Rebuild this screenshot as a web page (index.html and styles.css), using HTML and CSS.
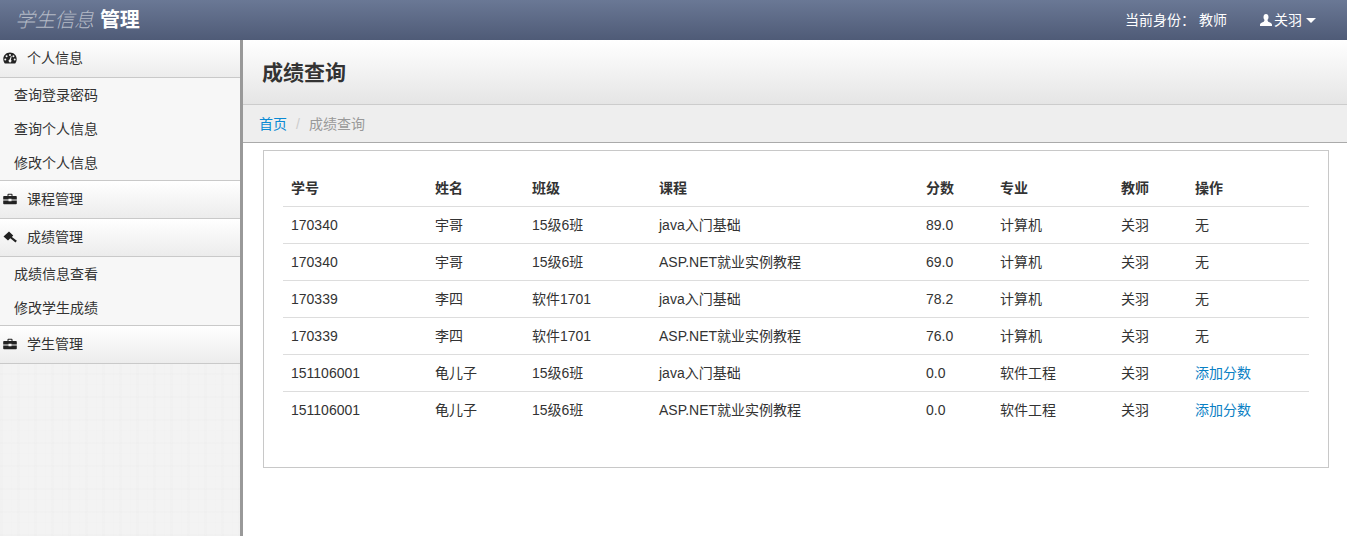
FILE: index.html
```html
<!DOCTYPE html>
<html lang="zh-CN">
<head>
  <meta charset="UTF-8" />
  <meta name="viewport" content="width=device-width, initial-scale=1" />
  <title>成绩查询</title>
  <link rel="stylesheet" href="styles.css">
</head>
<body>

  <header class="topbar">
    <div class="brand"><em>学生信息</em> <strong>管理</strong></div>
    <div class="topbar-right">
      <span class="role">当前身份：&nbsp;教师</span>
      <span class="user">
        <svg class="icon-user" viewBox="0 0 12 12" aria-hidden="true"><path d="M6 0C4.500 0 3.500 1.200 3.500 3 3.500 4.300 3.900 5.300 4.500 5.900 4.400 7 3.700 7.700 2.500 8.300 1.200 9 0 9.500 0 10.800L0 12 12 12 12 10.800C12 9.500 10.800 9 9.500 8.300 8.300 7.700 7.600 7 7.500 5.900 8.100 5.300 8.500 4.300 8.500 3 8.500 1.200 7.500 0 6 0Z"/></svg>
        关羽
        <span class="caret"></span>
      </span>
    </div>
  </header>

  <div class="layout">
    <nav class="sidebar">
      <a class="nav-head" href="#">
        <svg class="nav-icon" viewBox="0 0 14 12" aria-hidden="true"><path fill-rule="evenodd" d="M7 .5C3.200 .5.300 3.400.300 7c0 1.700.6 3.200 1.500 4.500h10.400c.9-1.300 1.500-2.800 1.500-4.500C13.700 3.400 10.800 .5 7 .5ZM7 2a1 1 0 1 1 0 2 1 1 0 0 1 0-2ZM3.600 3.300a1 1 0 1 1 0 2 1 1 0 0 1 0-2ZM10.400 3.300a1 1 0 1 1 0 2 1 1 0 0 1 0-2ZM2.300 6.500a1 1 0 1 1 0 2 1 1 0 0 1 0-2ZM11.700 6.500a1 1 0 1 1 0 2 1 1 0 0 1 0-2ZM8.700 4.200 7.900 7.800a1.400 1.400 0 1 1-1.300-.2L8 4Z"/></svg>
        个人信息
      </a>
      <div class="nav-sub">
        <a href="#">查询登录密码</a>
        <a href="#">查询个人信息</a>
        <a href="#">修改个人信息</a>
      </div>
      <a class="nav-head" href="#">
        <svg class="nav-icon" viewBox="0 0 14 12" aria-hidden="true"><path fill-rule="evenodd" d="M4.500 1.500C4.500 1 4.900 .8 5.300 .8H8.700C9.100 .8 9.500 1 9.500 1.500V3H13C13.500 3 13.800 3.300 13.800 3.800V6.400H8.500V5.700H5.500V6.400H.2V3.800C.2 3.300.5 3 1 3H4.500ZM5.500 1.800V3H8.500V1.800ZM.2 7.400H5.500V8.200H8.500V7.400H13.800V10.400C13.800 10.900 13.500 11.200 13 11.200H1C.5 11.200.2 10.900.2 10.400Z"/></svg>
        课程管理
      </a>
      <a class="nav-head" href="#">
        <svg class="nav-icon" viewBox="0 0 14 12" aria-hidden="true"><path d="M6 .6 10.200 4.600 8.900 5.900 13.900 9.700 12.500 11.400 7.300 7.300 5 9.600 .5 5.400Z"/></svg>
        成绩管理
      </a>
      <div class="nav-sub">
        <a href="#">成绩信息查看</a>
        <a href="#">修改学生成绩</a>
      </div>
      <a class="nav-head" href="#">
        <svg class="nav-icon" viewBox="0 0 14 12" aria-hidden="true"><path fill-rule="evenodd" d="M4.500 1.500C4.500 1 4.900 .8 5.300 .8H8.700C9.100 .8 9.500 1 9.500 1.500V3H13C13.500 3 13.800 3.300 13.800 3.800V6.400H8.500V5.700H5.500V6.400H.2V3.800C.2 3.300.5 3 1 3H4.500ZM5.500 1.800V3H8.500V1.800ZM.2 7.400H5.500V8.200H8.500V7.400H13.800V10.400C13.800 10.900 13.500 11.200 13 11.200H1C.5 11.200.2 10.900.2 10.400Z"/></svg>
        学生管理
      </a>
    </nav>

    <main class="content">
      <div class="page-title"><h1>成绩查询</h1></div>
      <div class="breadcrumb">
        <a href="#">首页</a>
        <span class="sep">/</span>
        <span class="current">成绩查询</span>
      </div>
      <div class="panel">
        <table class="score-table">
          <thead>
            <tr>
              <th class="col-id">学号</th>
              <th class="col-name">姓名</th>
              <th class="col-class">班级</th>
              <th class="col-course">课程</th>
              <th class="col-score">分数</th>
              <th class="col-major">专业</th>
              <th class="col-teacher">教师</th>
              <th>操作</th>
            </tr>
          </thead>
          <tbody>
            <tr><td>170340</td><td>宇哥</td><td>15级6班</td><td>java入门基础</td><td>89.0</td><td>计算机</td><td>关羽</td><td>无</td></tr>
            <tr><td>170340</td><td>宇哥</td><td>15级6班</td><td>ASP.NET就业实例教程</td><td>69.0</td><td>计算机</td><td>关羽</td><td>无</td></tr>
            <tr><td>170339</td><td>李四</td><td>软件1701</td><td>java入门基础</td><td>78.2</td><td>计算机</td><td>关羽</td><td>无</td></tr>
            <tr><td>170339</td><td>李四</td><td>软件1701</td><td>ASP.NET就业实例教程</td><td>76.0</td><td>计算机</td><td>关羽</td><td>无</td></tr>
            <tr><td>151106001</td><td>龟儿子</td><td>15级6班</td><td>java入门基础</td><td>0.0</td><td>软件工程</td><td>关羽</td><td><a href="#">添加分数</a></td></tr>
            <tr><td>151106001</td><td>龟儿子</td><td>15级6班</td><td>ASP.NET就业实例教程</td><td>0.0</td><td>软件工程</td><td>关羽</td><td><a href="#">添加分数</a></td></tr>
          </tbody>
        </table>
      </div>
    </main>
  </div>

</body>
</html>
```

FILE: styles.css
```css
* {
  box-sizing: border-box;
}
html, body {
  height: 100%;
}
body {
  margin: 0;
  background: #fff;
  color: #333;
  font-family: "Liberation Sans", "Noto Sans CJK SC", sans-serif;
  font-size: 14px;
  line-height: 20px;
  overflow: hidden;
}
a {
  text-decoration: none;
}
.topbar {
  height: 40px;
  display: flex;
  justify-content: space-between;
  align-items: center;
  padding: 0 31px 0 15px;
  background: linear-gradient(to bottom, #6a7895, #4f5b77);
  color: #fff;
}
.brand {
  font-size: 20px;
  line-height: 40px;
  letter-spacing: -0.3px;
}
.brand em {
  margin-right: 1px;
  color: #b4bac6;
  font-weight: 300;
}
.brand strong {
  color: #fff;
  font-weight: 700;
}
.topbar-right {
  display: flex;
  align-items: center;
  gap: 33px;
}
.role {
  margin-left: -1px;
}
.user {
  display: flex;
  align-items: center;
  gap: 2px;
}
.icon-user {
  width: 12px;
  height: 12px;
  fill: #fff;
}
.caret {
  width: 0;
  height: 0;
  margin-left: 2px;
  border-left: 5px solid transparent;
  border-right: 5px solid transparent;
  border-top: 5px solid #fff;
}
.layout {
  display: flex;
  height: calc(100% - 40px);
}
.sidebar {
  flex: none;
  width: 243px;
  border-right: 3px solid #999;
  background-color: #f3f3f3;
  background-image:
    repeating-linear-gradient(90deg, rgba(0,0,0,0.007) 0 3px, transparent 3px 11px, rgba(0,0,0,0.005) 11px 12px, transparent 12px 17px),
    repeating-linear-gradient(0deg, rgba(0,0,0,0.007) 0 2px, transparent 2px 13px, rgba(0,0,0,0.005) 13px 14px, transparent 14px 23px);
}
.nav-head {
  display: flex;
  align-items: center;
  height: 38px;
  padding: 0 0 2px 3px;
  gap: 10px;
  color: #333;
  background: linear-gradient(to bottom, #fff, #ececec);
  border-bottom: 1px solid #c9c9c9;
}
.nav-icon {
  width: 14px;
  height: 12px;
  fill: #222;
}
.nav-sub {
  background: #f7f7f7;
  border-bottom: 1px solid #c9c9c9;
}
.nav-sub a {
  display: block;
  height: 34px;
  padding: 7px 0 0 14px;
  color: #333;
}
.content {
  flex: 1;
  min-width: 0;
}
.page-title {
  height: 65px;
  padding-left: 19px;
  background: linear-gradient(to bottom, #fff, #e5e5e5);
  border-bottom: 1px solid #ccc;
}
.page-title h1 {
  margin: 0;
  font-size: 21px;
  line-height: 66px;
  font-weight: 700;
  color: #333;
}
.breadcrumb {
  height: 38px;
  display: flex;
  align-items: center;
  padding-left: 16px;
  background: #eee;
  border-bottom: 1px solid #aaa;
}
.breadcrumb a {
  color: #0a8ad4;
}
.breadcrumb .sep {
  margin: 0 9px;
  color: #ccc;
}
.breadcrumb .current {
  color: #999;
}
.panel {
  margin: 7px 18px 0 20px;
  height: 318px;
  padding: 19px 19px 0;
  border: 1px solid #c8c8c8;
}
.score-table {
  width: 100%;
  border-collapse: collapse;
  table-layout: fixed;
}
.score-table th,
.score-table td {
  padding: 8px;
  height: 37px;
  text-align: left;
  color: #333;
}
.score-table th {
  height: 36px;
  padding: 8px 8px 7px;
  font-weight: 700;
  border-bottom: 1px solid #ddd;
}
.score-table tbody td {
  border-bottom: 1px solid #ddd;
}
.score-table tbody tr:last-child td {
  border-bottom: 0;
}
.score-table a {
  color: #0a80c4;
}
.col-id { width: 144px; }
.col-name { width: 97px; }
.col-class { width: 127px; }
.col-course { width: 267px; }
.col-score { width: 74px; }
.col-major { width: 121px; }
.col-teacher { width: 74px; }
```
